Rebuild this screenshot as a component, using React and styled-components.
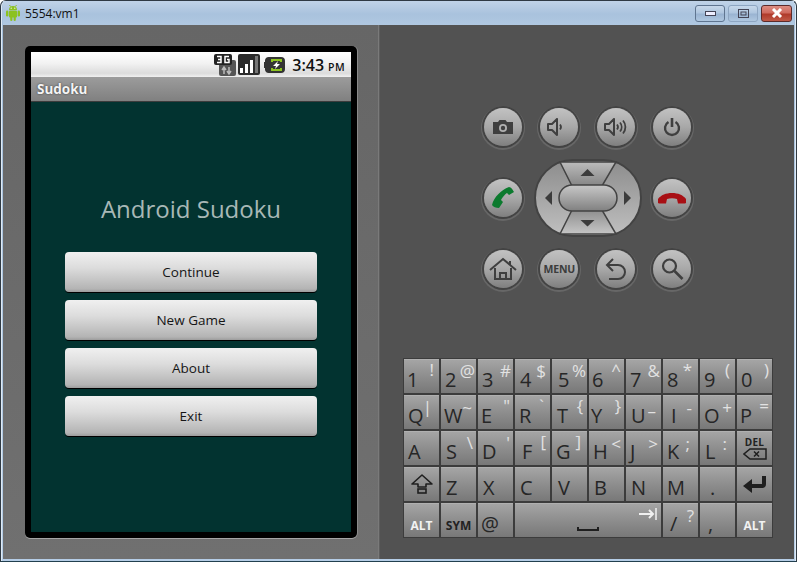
import React from 'react';
import styled, { createGlobalStyle } from 'styled-components';

const Global = createGlobalStyle`
  html, body { margin: 0; padding: 0; background: #fff; }
  #root { width: 797px; height: 562px; overflow: hidden; }
`;

const Window = styled.div`
  width: 797px;
  height: 562px;
  box-sizing: border-box;
  display: flex;
  flex-direction: column;
  background: linear-gradient(180deg, #b4cbe3 0%, #a5bfdb 5%, #b5cde6 100%);
  border: 1px solid #2f3a44;
  border-bottom-color: #22404f;
  border-radius: 6px 6px 0 0;
  padding: 0 2px 2px;
  box-shadow: inset 1px 0 0 #dfeaf5, inset -1px 0 0 #dfeaf5;
`;

const TitleBar = styled.div`
  height: 24px;
  flex: none;
  display: flex;
  align-items: center;
  padding: 0 2px 0 3px;
  background: linear-gradient(180deg, #c0d3e8 0%, #a9c2dd 55%, #b0c8e1 100%);
`;

const WindowTitle = styled.span`
  margin-left: 5px;
  font: 12px 'Open Sans', sans-serif;
  color: #111;
  flex: 1;
`;

const ChromeButton = styled.div`
  width: ${(p) => p.$w}px;
  height: 17px;
  margin-left: 3px;
  display: flex;
  align-items: center;
  justify-content: center;
  box-sizing: border-box;
  border: 1px solid ${(p) => (p.$close ? '#5c2b2b' : p.$dim ? '#8ea6c2' : '#5f7590')};
  border-radius: 3px;
  background: ${(p) =>
    p.$close
      ? 'linear-gradient(180deg, #dd8d82 0%, #cf6a5e 45%, #b03a2a 55%, #c05a48 100%)'
      : 'linear-gradient(180deg, #c7d8ea 0%, #afc6df 45%, #9ab4d2 55%, #afc7e0 100%)'};
`;

const Body = styled.div`
  flex: 1;
  display: flex;
  min-height: 0;
`;

const LeftPanel = styled.div`
  width: 376px;
  flex: none;
  box-sizing: border-box;
  background: linear-gradient(180deg, #666 0%, #707070 100%);
  border-right: 1px solid #7a7a7a;
  padding: 21px 0 0 22px;
`;

const RightPanel = styled.div`
  flex: 1;
  background: #525252;
  border-left: 1px solid #5e5e5e;
  padding: 81px 0 0 23px;
  box-sizing: border-box;
  display: flex;
  flex-direction: column;
`;

const Phone = styled.div`
  width: 332px;
  height: 492px;
  box-sizing: border-box;
  background: #000;
  border-radius: 5px;
  padding: 6px;
  box-shadow: 0 1px 0 #a5a5a5, 1px 0 0 #8a8a8a;
  display: flex;
  flex-direction: column;
`;

const StatusBar = styled.div`
  height: 25px;
  flex: none;
  display: flex;
  align-items: center;
  justify-content: flex-end;
  padding-right: 6px;
  background: linear-gradient(180deg, #fff 0%, #f2f2f2 45%, #dcdcdc 85%, #f0f0f0 100%);
`;

const Clock = styled.span`
  font: 600 16px 'Open Sans', sans-serif;
  color: #111;
  margin-left: 7px;
`;

const ClockSuffix = styled.span`
  font-size: 10.5px;
  font-weight: 600;
  margin-left: 4px;
  letter-spacing: 0.4px;
`;

const AppTitle = styled.div`
  height: 25px;
  flex: none;
  box-sizing: border-box;
  display: flex;
  align-items: center;
  padding-left: 6px;
  font: 700 13.5px 'Open Sans', sans-serif;
  color: #f4f4f4;
  text-shadow: 0 0 2px #333;
  background: linear-gradient(180deg, #9c9c9c 0%, #808080 100%);
  border-bottom: 1px solid #3c3c3c;
`;

const Screen = styled.div`
  flex: 1;
  background: #023330;
  display: flex;
  flex-direction: column;
  align-items: center;
`;

const Heading = styled.h1`
  margin: 90px 0 24px;
  height: 36px;
  font: 400 24px/34px 'Open Sans', sans-serif;
  color: #a8b8b6;
`;

const MenuButton = styled.button`
  width: 252px;
  height: 40px;
  margin-bottom: 8px;
  padding: 0;
  border: 0;
  border-radius: 4px;
  font: 13.5px 'Open Sans', sans-serif;
  color: #151515;
  background: linear-gradient(180deg, #f0f0f0 0%, #dcdcdc 40%, #b4b4b4 92%, #9c9c9c 100%);
  box-shadow: 0 1px 0 #000;
`;

const HardKeys = styled.div`
  width: 211px;
  margin-left: 79px;
  display: grid;
  grid-template-columns: repeat(4, 42px);
  grid-template-rows: repeat(3, 42px);
  justify-content: space-between;
  row-gap: 29px;
  align-items: center;
  justify-items: center;
`;

const RoundKey = styled.div`
  width: 38px;
  height: 38px;
  border-radius: 50%;
  display: flex;
  align-items: center;
  justify-content: center;
  background: linear-gradient(180deg, #c2c2c2 0%, #a8a8a8 50%, #7f7f7f 100%);
  box-shadow: 0 0 0 2px #434343, 0 1px 0 3px #676767;
`;

const DpadSlot = styled.div`
  grid-column: 2 / 4;
  width: 108px;
  height: 78px;
`;

const MenuLabel = styled.span`
  font: 700 10.5px 'Open Sans', sans-serif;
  color: #3c3c3c;
  letter-spacing: -0.2px;
`;

const Keyboard = styled.div`
  align-self: flex-start;
  margin: 68px 0 0;
  padding: 1px;
  background: #3c3c3c;
  display: grid;
  grid-template-columns: repeat(10, 35px);
  grid-auto-rows: 34px;
  gap: 2px;
`;

const Key = styled.div`
  grid-column: span ${(p) => p.$span || 1};
  display: grid;
  background: linear-gradient(180deg, #a6a6a6 0%, #8e8e8e 50%, #787878 100%);
  box-shadow: inset 0 1px 0 #b0b0b0;
`;

const KeyMain = styled.span`
  grid-area: 1 / 1;
  align-self: end;
  justify-self: start;
  padding: 0 0 0 ${(p) => p.$left ?? 4}px;
  font: 20px/26px 'Open Sans', sans-serif;
  color: #262626;
`;

const KeyAlt = styled.span`
  grid-area: 1 / 1;
  align-self: start;
  justify-self: end;
  padding: ${(p) => p.$top ?? 1}px ${(p) => p.$right ?? 4}px 0 0;
  font: 17px/20px 'Open Sans', sans-serif;
  color: #e2e2e2;
`;

const KeyCenter = styled.div`
  grid-area: 1 / 1;
  display: flex;
  align-items: center;
  justify-content: center;
`;

const ModLabel = styled.span`
  grid-area: 1 / 1;
  align-self: center;
  justify-self: center;
  padding-top: 10px;
  font: 700 12px 'Open Sans', sans-serif;
  color: ${(p) => (p.$dark ? '#222' : '#f2f2f2')};
`;

const DelStack = styled.div`
  display: flex;
  flex-direction: column;
  align-items: center;
`;

const DelText = styled.span`
  font: 700 10px/11px 'Open Sans', sans-serif;
  color: #222;
  letter-spacing: 0.3px;
`;

const iconColor = '#3f3f3f';
const logoGreen = '#8cc220';

const AndroidLogo = () => (
  <svg width="14" height="16" viewBox="0 0 14 16">
    <path d="M3 5a4 4 0 0 1 8 0z" fill={logoGreen} />
    <path d="M4.500 1.500L3.500 0M9.500 1.500l1-1.500" stroke={logoGreen} />
    <rect x="3" y="5.500" width="8" height="7" rx="1" fill={logoGreen} />
    <rect x="0" y="5.500" width="2.400" height="6" rx="1.200" fill={logoGreen} />
    <rect x="11.600" y="5.500" width="2.400" height="6" rx="1.200" fill={logoGreen} />
    <rect x="4.200" y="11" width="2.200" height="5" rx="1.100" fill={logoGreen} />
    <rect x="7.600" y="11" width="2.200" height="5" rx="1.100" fill={logoGreen} />
    <circle cx="5.200" cy="3.200" r=".6" fill="#fff" />
    <circle cx="8.800" cy="3.200" r=".6" fill="#fff" />
  </svg>
);

const Net3G = () => (
  <svg width="22" height="22" viewBox="0 0 22 22">
    <rect x="5" y="6" width="17" height="16" rx="2" fill="#555" />
    <rect x="0" y="0" width="18" height="11" rx="2" fill="#222" />
    <path d="M3 2.500h4v6H3M4 5.500h3M15 2.500h-4v6h4V5.500h-2" stroke="#fff" strokeWidth="1.500" fill="none" />
    <path d="M10 20v-6M8 16l2-3 2 3M15 13v6M13 17l2 3 2-3" stroke="#bbb" strokeWidth="1.500" fill="none" />
  </svg>
);

const Signal = () => (
  <svg width="22" height="22" viewBox="0 0 22 22" style={{ marginLeft: 2 }}>
    <rect width="22" height="21" rx="2" fill="#2b2b2b" />
    <rect x="2" y="14" width="3" height="5" fill="#fff" />
    <rect x="7" y="10" width="3" height="9" fill="#fff" />
    <rect x="12" y="6" width="3" height="13" fill="#fff" />
    <rect x="17" y="2" width="3" height="17" fill="#777" />
  </svg>
);

const Battery = () => (
  <svg width="21" height="16" viewBox="0 0 21 16" style={{ marginLeft: 4 }}>
    <path d="M5 0h12a4 4 0 0 1 4 4v8a4 4 0 0 1-4 4H5a4 4 0 0 1-4-3v-2H0V5h1V3a4 4 0 0 1 4-3z" fill="#333" />
    <path d="M8 5V3h9v2M8 11v2h9v-2" fill="none" stroke={logoGreen} strokeWidth="2" />
    <path d="M14 4l-5 5h3l-1 3 5-5h-3z" fill="#fff" />
  </svg>
);

const Camera = () => (
  <svg width="22" height="16" viewBox="0 0 22 16">
    <path d="M1 3h5l1.500-2h6L15 3h6v12H1z" fill={iconColor} />
    <circle cx="11" cy="9" r="4" fill="#b0b0b0" />
    <circle cx="11" cy="9" r="2.200" fill={iconColor} />
  </svg>
);

const Speaker = ({ waves }) => (
  <svg width="24" height="18" viewBox="0 0 24 18">
    <path d="M1 6h4l5-5v16l-5-5H1z" fill="none" stroke={iconColor} strokeWidth="2" strokeLinejoin="round" />
    <path d="M13 6.500a4 4 0 0 1 0 5" fill="none" stroke={iconColor} strokeWidth="1.800" />
    {waves && <path d="M16 4.500a7 7 0 0 1 0 9M19 2.500a10 10 0 0 1 0 13" fill="none" stroke={iconColor} strokeWidth="1.800" />}
  </svg>
);

const Power = () => (
  <svg width="18" height="20" viewBox="0 0 18 20">
    <path d="M5.500 5a7 7 0 1 0 7 0" fill="none" stroke={iconColor} strokeWidth="2.400" />
    <path d="M9 1v9" stroke={iconColor} strokeWidth="2.600" />
  </svg>
);

const CallIcon = () => (
  <svg width="24" height="24" viewBox="0 0 24 24">
    <path d="M1 19c2-8 9-15 17-18 2 0 4 3 5 5l-5 3-2-2c-2 1-5 5-6 7l2 2-4 6c-3 0-6-1-7-3z" fill="#0c7a2e" />
  </svg>
);

const EndIcon = () => (
  <svg width="30" height="12" viewBox="0 0 30 12">
    <path d="M1 11V7c3-4 8-6 14-6s11 2 14 6v4l-1 .5h-7L20 7c-3-1-7-1-10 0l-1 4.500H2z" fill="#a80f14" />
  </svg>
);

const HomeIcon = () => (
  <svg width="28" height="24" viewBox="0 0 28 24">
    <path d="M1 13L14 2l13 11M21 4v4M6 11v11h16V11M11 22v-6h6v6" fill="none" stroke={iconColor} strokeWidth="2" />
  </svg>
);

const BackIcon = () => (
  <svg width="24" height="24" viewBox="0 0 24 24">
    <path d="M5 22h9a7 7 0 0 0 0-14H4M9 2L3 8l6 6" fill="none" stroke={iconColor} strokeWidth="2" />
  </svg>
);

const SearchIcon = () => (
  <svg width="24" height="24" viewBox="0 0 24 24">
    <circle cx="9.500" cy="9" r="6.500" fill="none" stroke={iconColor} strokeWidth="2.200" />
    <path d="M14.500 14l8 8" stroke={iconColor} strokeWidth="2.600" />
  </svg>
);

const Dpad = () => (
  <svg width="108" height="78" viewBox="0 0 108 78">
    <defs>
      <linearGradient id="padSide" x1="0" y1="0" x2="0" y2="1">
        <stop offset="0" stopColor="#8c8c8c" />
        <stop offset="1" stopColor="#c0c0c0" />
      </linearGradient>
      <linearGradient id="padTop" x1="0" y1="0" x2="0" y2="1">
        <stop offset="0" stopColor="#bcbcbc" />
        <stop offset="1" stopColor="#858585" />
      </linearGradient>
      <linearGradient id="padBottom" x1="0" y1="0" x2="0" y2="1">
        <stop offset="0" stopColor="#8e8e8e" />
        <stop offset="1" stopColor="#c6c6c6" />
      </linearGradient>
      <linearGradient id="padPill" x1="0" y1="0" x2="0" y2="1">
        <stop offset="0" stopColor="#c8c8c8" />
        <stop offset="1" stopColor="#808080" />
      </linearGradient>
    </defs>
    <rect x="1" y="1" width="106" height="76" rx="38" fill="url(#padSide)" stroke="#434343" strokeWidth="2" />
    <path d="M26 3h56L68 27H38z" fill="url(#padTop)" stroke="#434343" strokeWidth="1.500" />
    <path d="M38 51h30l14 24H26z" fill="url(#padBottom)" stroke="#434343" strokeWidth="1.500" />
    <rect x="25" y="26" width="58" height="26" rx="13" fill="url(#padPill)" stroke="#434343" strokeWidth="1.500" />
    <path d="M53.500 10l7 7h-14z" fill="#3c3c3c" />
    <path d="M46.500 61h14l-7 6.500z" fill="#3c3c3c" />
    <path d="M18 32v14l-7-7z" fill="#3c3c3c" />
    <path d="M90 32v14l7-7z" fill="#3c3c3c" />
  </svg>
);

const ShiftIcon = () => (
  <svg width="22" height="20" viewBox="0 0 22 20">
    <path d="M11 1L1 10h6v3h8v-3h6z" fill="none" stroke="#1f1f1f" strokeWidth="1.600" strokeLinejoin="round" />
    <rect x="7" y="15" width="8" height="4" fill="none" stroke="#1f1f1f" strokeWidth="1.600" />
  </svg>
);

const DelIcon = () => (
  <svg width="24" height="12" viewBox="0 0 24 12">
    <path d="M7 1h16v10H7L1 6z" fill="none" stroke="#1f1f1f" strokeWidth="1.500" />
    <path d="M11 3.500l5 5M16 3.500l-5 5" stroke="#1f1f1f" strokeWidth="1.500" />
  </svg>
);

const EnterIcon = () => (
  <svg width="26" height="20" viewBox="0 0 26 20">
    <path d="M22 2v8a2 2 0 0 1-2 2H7" fill="none" stroke="#1f1f1f" strokeWidth="4" />
    <path d="M1 12l9-7v14z" fill="#1f1f1f" />
  </svg>
);

// label, alternate, left inset, top inset, right inset
const KEY_ROWS = [
  [['1', '!', 3, 1, 5], ['2', '@', 4, 2, 1], ['3', '#', 4, 2, 2], ['4', '$', 5, 2, 4], ['5', '%', 6, 2, 1], ['6', '^', 3, 1, 3], ['7', '&', 4, 2, 1], ['8', '*', 4, 1, 6], ['9', '(', 4, 1, 5], ['0', ')', 4, 1, 3]],
  [['Q', '|', 4, 2, 7], ['W', '~', 3, 3, 4], ['E', '"', 3, 1, 3], ['R', '`', 4, 1, 6], ['T', '{', 5, 1, 4], ['Y', '}', 2, 1, 3], ['U', '–', 5, 6, 5], ['I', '-', 8, 3, 6], ['O', '+', 4, 3, 3], ['P', '=', 3, 1, 3]],
  [['A', '', 4, 1, 0], ['S', '\\', 5, 2, 3], ['D', '\'', 4, 2, 3], ['F', '[', 7, 1, 4], ['G', ']', 4, 1, 6], ['H', '<', 4, 3, 3], ['J', '>', 4, 3, 3], ['K', ';', 4, 3, 8], ['L', ':', 5, 3, 8]],
];

const LOWER_KEYS = [['Z', 5], ['X', 5], ['C', 5], ['V', 6], ['B', 5], ['N', 5], ['M', 4], ['.', 10]];

const MENU_ITEMS = ['Continue', 'New Game', 'About', 'Exit'];

const TextKey = ({ label, alt, left, top, right }) => (
  <Key>
    <KeyMain $left={left}>{label}</KeyMain>
    {alt && <KeyAlt $top={top} $right={right}>{alt}</KeyAlt>}
  </Key>
);

export default function App() {
  return (
    <>
      <Global />
      <Window>
        <TitleBar>
          <AndroidLogo />
          <WindowTitle>5554:vm1</WindowTitle>
          <ChromeButton $w={30}>
            <svg width="11" height="5"><rect x=".5" y=".5" width="10" height="4" fill="#eef" stroke="#445" /></svg>
          </ChromeButton>
          <ChromeButton $w={30} $dim>
            <svg width="11" height="9"><rect x=".5" y=".5" width="10" height="8" fill="none" stroke="#445" /><rect x="3" y="3" width="5" height="3" fill="none" stroke="#445" /></svg>
          </ChromeButton>
          <ChromeButton $w={31} $close>
            <svg width="12" height="10"><path d="M2 1l8 8M10 1l-8 8" stroke="#fff" strokeWidth="3" /></svg>
          </ChromeButton>
        </TitleBar>
        <Body>
          <LeftPanel>
            <Phone>
              <StatusBar>
                <Net3G />
                <Signal />
                <Battery />
                <Clock>3:43<ClockSuffix>PM</ClockSuffix></Clock>
              </StatusBar>
              <AppTitle>Sudoku</AppTitle>
              <Screen>
                <Heading>Android Sudoku</Heading>
                {MENU_ITEMS.map((item) => (
                  <MenuButton key={item}>{item}</MenuButton>
                ))}
              </Screen>
            </Phone>
          </LeftPanel>
          <RightPanel>
            <HardKeys>
              <RoundKey><Camera /></RoundKey>
              <RoundKey><Speaker /></RoundKey>
              <RoundKey><Speaker waves /></RoundKey>
              <RoundKey><Power /></RoundKey>
              <RoundKey><CallIcon /></RoundKey>
              <DpadSlot><Dpad /></DpadSlot>
              <RoundKey><EndIcon /></RoundKey>
              <RoundKey><HomeIcon /></RoundKey>
              <RoundKey><MenuLabel>MENU</MenuLabel></RoundKey>
              <RoundKey><BackIcon /></RoundKey>
              <RoundKey><SearchIcon /></RoundKey>
            </HardKeys>
            <Keyboard>
              {KEY_ROWS.flat().map(([l, a, left, top, right]) => (
                <TextKey key={l} label={l} alt={a} left={left} top={top} right={right} />
              ))}
              <Key>
                <KeyCenter>
                  <DelStack>
                    <DelText>DEL</DelText>
                    <DelIcon />
                  </DelStack>
                </KeyCenter>
              </Key>
              <Key>
                <KeyCenter><ShiftIcon /></KeyCenter>
              </Key>
              {LOWER_KEYS.map(([l, left]) => (
                <TextKey key={l} label={l} left={left} />
              ))}
              <Key>
                <KeyCenter><EnterIcon /></KeyCenter>
              </Key>
              <Key><ModLabel>ALT</ModLabel></Key>
              <Key><ModLabel $dark>SYM</ModLabel></Key>
              <TextKey label="@" left={3} />
              <Key $span={4}>
                <KeyCenter>
                  <svg width="147" height="34" viewBox="0 0 147 34">
                    <path d="M63 24v3h20v-3" fill="none" stroke="#1f1f1f" strokeWidth="2" />
                    <path d="M124 11h14M134 7l4 4-4 4" fill="none" stroke="#f0f0f0" strokeWidth="2" />
                    <path d="M141 5v12" stroke="#f0f0f0" strokeWidth="1.500" />
                  </svg>
                </KeyCenter>
              </Key>
              <TextKey label="/" alt="?" left={7} top={3} right={4} />
              <TextKey label="," left={8} />
              <Key><ModLabel>ALT</ModLabel></Key>
            </Keyboard>
          </RightPanel>
        </Body>
      </Window>
    </>
  );
}
